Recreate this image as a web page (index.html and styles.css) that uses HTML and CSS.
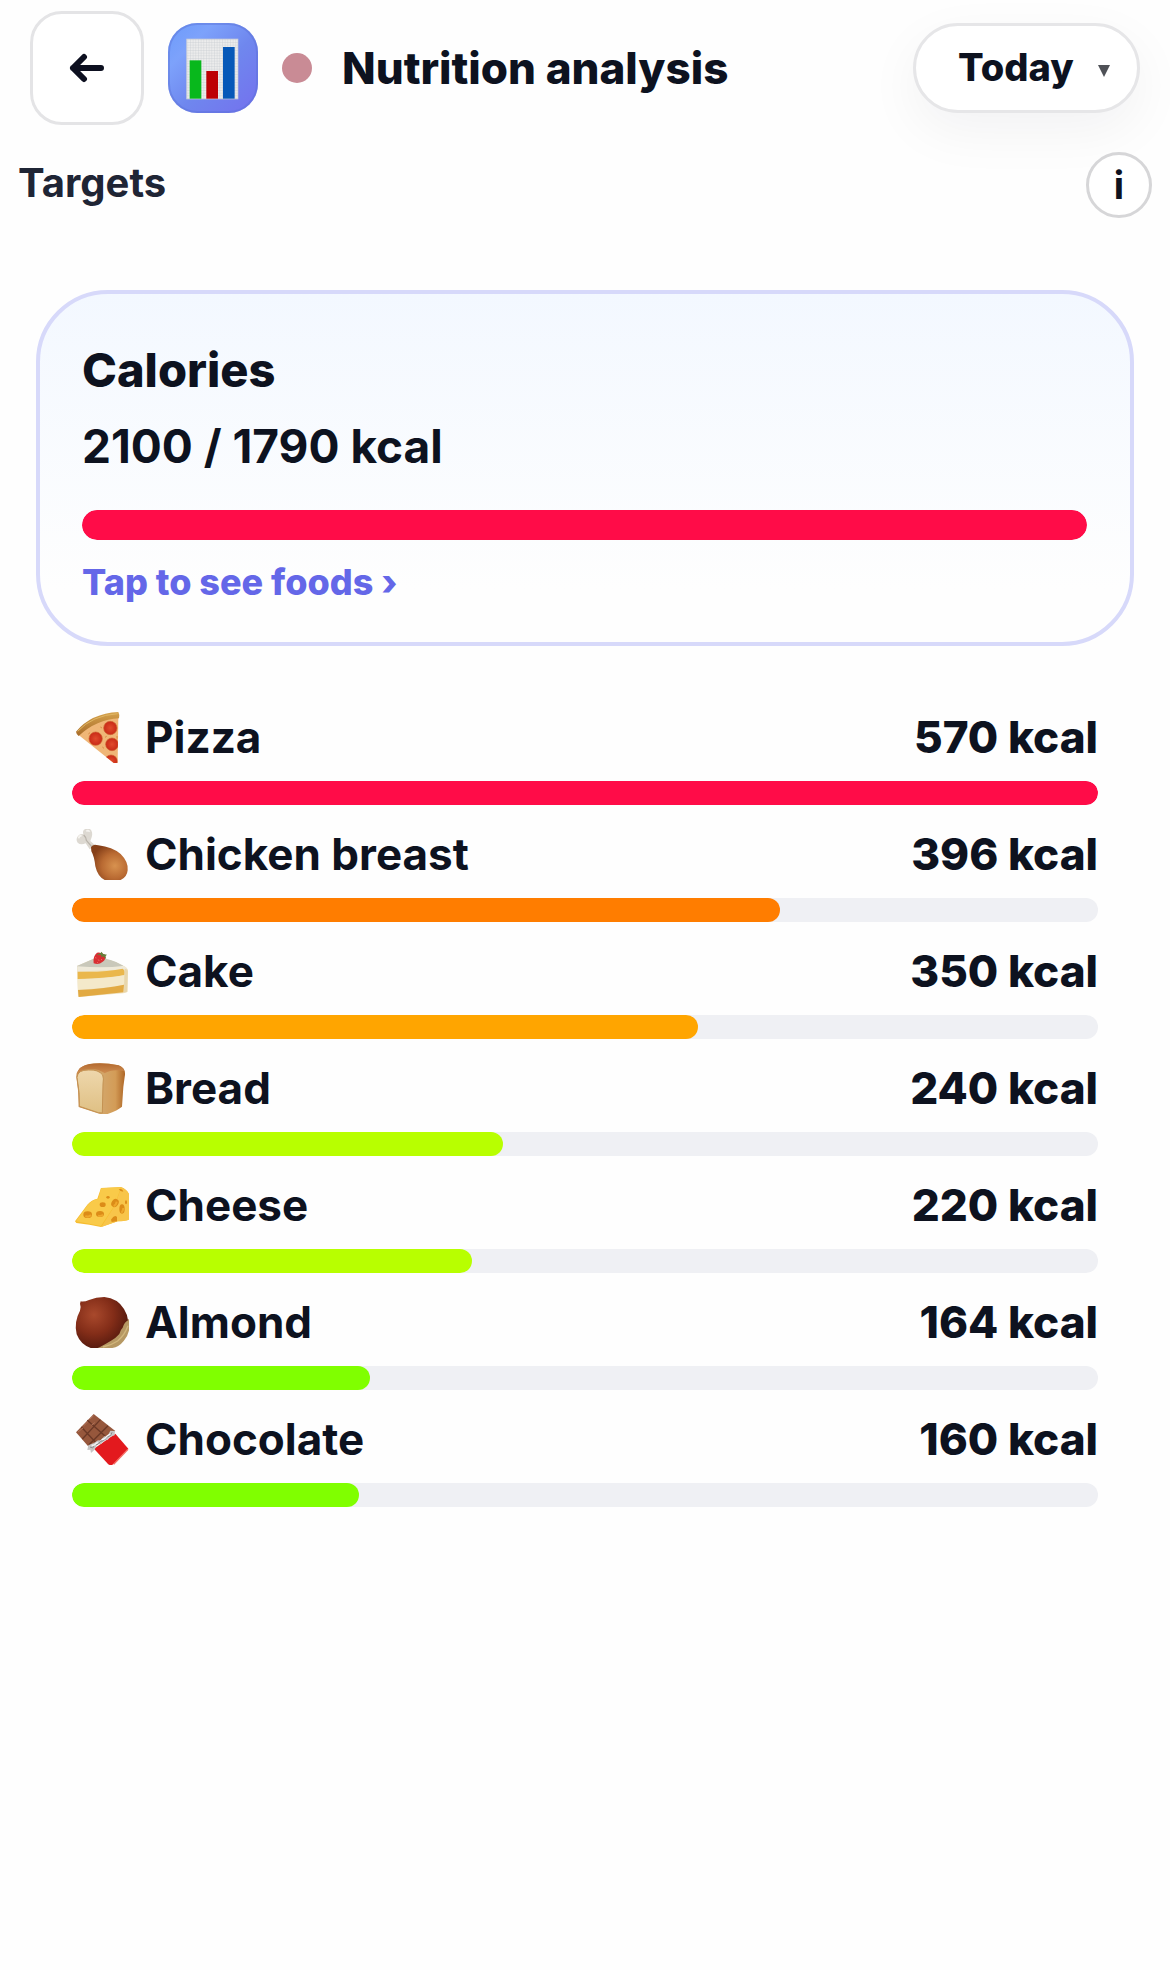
FILE: index.html
```html
<!DOCTYPE html>
<html lang="en">
<head>
<meta charset="utf-8">
<meta name="viewport" content="width=device-width, initial-scale=1">
<title>Nutrition analysis</title>
<link rel="stylesheet" href="styles.css">
</head>
<body>

<header class="topbar">
  <button class="back" type="button" aria-label="Back">
    <svg width="36" height="30" viewBox="0 0 36 30"><path d="M15 4 L4 15 L15 26 M4 15 H32"/></svg>
  </button>
  <svg class="logo" viewBox="504 69 270 270">
    <defs>
      <linearGradient id="logoBg" x1="0" y1="0" x2="1" y2="1">
        <stop offset="0" stop-color="#6c9bfa"/>
        <stop offset=".25" stop-color="#7da2fb"/>
        <stop offset=".55" stop-color="#6f87ee"/>
        <stop offset="1" stop-color="#7470ee"/>
      </linearGradient>
      <pattern id="grid" x="562" y="118" width="8" height="8" patternUnits="userSpaceOnUse">
        <rect width="8" height="8" fill="#ececec"/>
        <path d="M0 0H8M0 0V8" stroke="#c4cacf" stroke-width="2"/>
      </pattern>
    </defs>
    <rect x="504" y="69" width="270" height="270" rx="88" fill="url(#logoBg)"/>
    <rect x="507" y="72" width="264" height="264" rx="85" fill="none" stroke="#5a70d8" stroke-opacity=".45" stroke-width="6"/>
    <rect x="560" y="117" width="154" height="180" fill="url(#grid)" stroke="#c3cad8" stroke-width="2"/>
    <rect x="569" y="181" width="35" height="115" fill="#08b81c"/>
    <rect x="619" y="213" width="35" height="83" fill="#bd0003"/>
    <rect x="669" y="141" width="35" height="155" fill="#0658b8"/>
  </svg>
  <span class="dot"></span>
  <h1>Nutrition analysis</h1>
  <label class="period">
    <select aria-label="Period">
      <option>Today</option>
      <option>Week</option>
    </select>
    <svg width="12" height="12" viewBox="0 0 12 12"><path d="M0 0H12L6 12Z"/></svg>
  </label>
</header>

<main>
  <div class="targets">
    <h2>Targets</h2>
    <button class="info" type="button" aria-label="Info">i</button>
  </div>

  <section class="card">
    <h3>Calories</h3>
    <p class="total">2100 / 1790 kcal</p>
    <div class="bar big"><div class="fill red" style="width: 100%"></div></div>
    <a href="#foods">Tap to see foods ›</a>
  </section>

  <ul class="foods" id="foods">
    <li>
      <div class="row">
        <svg class="icon" viewBox="-9 0 171 153">
          <defs>
            <linearGradient id="crust" x1="0" y1="0" x2="0" y2="1"><stop offset="0" stop-color="#d5a24c"/><stop offset="1" stop-color="#a86c2a"/></linearGradient>
            <radialGradient id="pep"><stop offset="0" stop-color="#e04b2c"/><stop offset="1" stop-color="#c92a17"/></radialGradient>
            <clipPath id="slice"><path d="M10 68Q62 20 130 16L128 153H116Z"/></clipPath>
          </defs>
          <path d="M10 68Q62 20 130 16L128 153H116Z" fill="#efb677"/>
          <g clip-path="url(#slice)" fill="url(#pep)" stroke="#cf6030" stroke-width="2">
            <circle cx="106" cy="48" r="20"/>
            <circle cx="62" cy="80" r="20"/>
            <circle cx="111" cy="97" r="19"/>
            <circle cx="108" cy="148" r="19"/>
          </g>
          <path d="M76 45l5 3M82 105l5 4M90 76l5-3M40 66l5-4M126 72v8" stroke="#d98b45" stroke-width="3"/>
          <path d="M3 59Q48 4 130 0Q134 6 132 19Q65 22 11 72Q4 67 3 59Z" fill="url(#crust)"/>
          <path d="M8 58Q52 10 128 5" fill="none" stroke="#e0b764" stroke-width="3"/>
        </svg>
        <span class="name">Pizza</span>
        <span class="kcal">570 kcal</span>
      </div>
      <div class="bar"><div class="fill red" style="width: 100%"></div></div>
    </li>
    <li>
      <div class="row">
        <svg class="icon" viewBox="-9 0 171 153">
          <defs>
            <radialGradient id="meat" cx=".65" cy=".6" r=".65"><stop offset="0" stop-color="#d8924f"/><stop offset=".55" stop-color="#b96a32"/><stop offset="1" stop-color="#864019"/></radialGradient>
          </defs>
          <path d="M44 61L32 43Q17 50 8 41Q1 31 9 21Q16 13 25 16Q21 4 31 0H45Q55 8 50 25L46 36L62 50Z" fill="#ddd9d2"/>
          <path d="M26 18Q34 25 34 34L52 55" fill="none" stroke="#b9b3aa" stroke-width="4"/>
          <path d="M11 28Q12 20 20 20M34 7Q39 2 44 8" fill="none" stroke="#f5f3ef" stroke-width="5"/>
          <path d="M48 55Q53 43 70 49Q112 54 137 75Q161 99 158 124Q156 145 137 153H89Q68 143 61 112Q58 83 49 67Z" fill="url(#meat)"/>
        </svg>
        <span class="name">Chicken breast</span>
        <span class="kcal">396 kcal</span>
      </div>
      <div class="bar"><div class="fill orange" style="width: 69%"></div></div>
    </li>
    <li>
      <div class="row">
        <svg class="icon" viewBox="-9 0 171 153">
          <path d="M6 60L61 36Q96 33 145 59Q158 65 159 74L158 137Q154 140 144 142L11 153L9 150Z" fill="#eee0bd"/>
          <path d="M6 60L61 36Q104 34 145 59Q132 68 6 64Z" fill="#c9c8ba"/>
          <path d="M6 61Q90 67 143 60Q155 62 157 72Q145 69 8 77Z" fill="#eee9d9"/>
          <path d="M8 77Q95 79 143 68Q151 73 148 87Q102 96 8 99Z" fill="#eab74c"/>
          <path d="M8 100Q97 98 148 88L148 117Q97 127 9 131Z" fill="#f4e9ca"/>
          <path d="M9 132Q94 128 147 116L145 139L11 153Z" fill="#e2aa43"/>
          <path d="M149 68Q160 68 158 82L156 137L147 139Z" fill="#e8d6ab"/>
          <path d="M56 52Q53 30 66 20Q78 17 91 27Q94 41 82 48Q72 57 56 52Z" fill="#d92e32"/>
          <path d="M65 27L77 21L80 17L84 24L96 26L91 31L94 40L84 31L78 34L79 27Z" fill="#62813b"/>
          <path d="M62 34l1 3M70 41l2 3M66 49l2 1M79 41l2-2" stroke="#f68073" stroke-width="3"/>
        </svg>
        <span class="name">Cake</span>
        <span class="kcal">350 kcal</span>
      </div>
      <div class="bar"><div class="fill amber" style="width: 61%"></div></div>
    </li>
    <li>
      <div class="row">
        <svg class="icon" viewBox="-9 0 171 153">
          <defs>
            <linearGradient id="loaf"><stop offset="0" stop-color="#c68542"/><stop offset=".55" stop-color="#d3a568"/><stop offset=".8" stop-color="#d39c57"/><stop offset="1" stop-color="#ae6626"/></linearGradient>
            <linearGradient id="top" x1="0" y1="0" x2="0" y2="1"><stop offset="0" stop-color="#b3692f"/><stop offset="1" stop-color="#d29255"/></linearGradient>
            <linearGradient id="crumb" x1="0" y1="0" x2="0" y2="1"><stop offset="0" stop-color="#eed7ac"/><stop offset="1" stop-color="#dfc084"/></linearGradient>
          </defs>
          <path d="M4 42Q3 15 35 5Q80-4 131 7Q155 16 149 42L145 72L141 131Q128 142 98 153H75L11 132Q12 91 4 42Z" fill="url(#loaf)"/>
          <path d="M6 34Q9 9 43 3Q83-3 130 7Q144 12 147 24Q112 17 89 31Q70 16 39 18Q15 22 6 34Z" fill="url(#top)"/>
          <path d="M6 43Q8 20 41 21Q70 19 83 36Q87 46 84 63L82 150L70 149L13 130Q15 91 6 43Z" fill="url(#crumb)" stroke="#c49252" stroke-width="3"/>
        </svg>
        <span class="name">Bread</span>
        <span class="kcal">240 kcal</span>
      </div>
      <div class="bar"><div class="fill lime" style="width: 42%"></div></div>
    </li>
    <li>
      <div class="row">
        <svg class="icon" viewBox="-9 0 171 153">
          <path d="M0 124L37 74Q50 59 67 56L78 24L138 21Q162 31 165 52V115Q162 124 128 124L78 141Q45 134 4 129Z" fill="#f6bc2f"/>
          <path d="M79 141L120 76L139 22Q159 30 165 51V116Q160 124 128 124Z" fill="#f8c54a"/>
          <path d="M3 124L38 75Q54 58 70 57L78 25L138 22L119 76Q99 106 78 138Z" fill="#f9ca49"/>
          <g fill="#dc8c18">
            <ellipse cx="38" cy="104" rx="13" ry="10"/>
            <ellipse cx="75" cy="102" rx="12" ry="9"/>
            <ellipse cx="83" cy="74" rx="9" ry="7"/>
            <ellipse cx="120" cy="69" rx="10" ry="13" transform="rotate(35 120 69)"/>
            <ellipse cx="99" cy="52" rx="5" ry="4"/>
            <ellipse cx="141" cy="87" rx="8" ry="14"/>
            <ellipse cx="153" cy="67" rx="3" ry="6"/>
            <path d="M108 119Q118 103 126 111V124L110 126Z"/>
            <path d="M131 28Q141 24 145 34Q139 37 131 28Z"/>
          </g>
          <path d="M31 108q10 5 17-3M69 107q9 3 15-3M116 78q8-3 9-13M139 98q6-5 6-14" fill="none" stroke="#efa72a" stroke-width="6"/>
        </svg>
        <span class="name">Cheese</span>
        <span class="kcal">220 kcal</span>
      </div>
      <div class="bar"><div class="fill lime" style="width: 39%"></div></div>
    </li>
    <li>
      <div class="row">
        <svg class="icon" viewBox="-9 0 171 153">
          <defs>
            <radialGradient id="nut" cx=".35" cy=".35" r=".75"><stop offset="0" stop-color="#a9492c"/><stop offset=".5" stop-color="#832d18"/><stop offset="1" stop-color="#4a150c"/></radialGradient>
          </defs>
          <path d="M162 66Q169 106 146 132Q132 150 112 153H60Q75 110 162 66Z" fill="#b69863"/>
          <path d="M17 13Q28 15 42 9Q63 0 88 0Q128 4 147 36Q158 54 159 70Q148 76 143 92Q136 98 133 111Q122 124 108 131Q88 143 75 150L68 153H47Q17 143 5 112Q-4 75 15 41Q19 30 15 20Z" fill="url(#nut)"/>
          <path d="M159 86Q149 114 128 132Q106 146 84 150" fill="none" stroke="#d0b67d" stroke-width="4"/>
        </svg>
        <span class="name">Almond</span>
        <span class="kcal">164 kcal</span>
      </div>
      <div class="bar"><div class="fill green" style="width: 29%"></div></div>
    </li>
    <li>
      <div class="row">
        <svg class="icon" viewBox="-9 0 171 153">
          <path d="M3 55L56 0L121 51L42 100Z" fill="#96573c"/>
          <path d="M19 39L61 84M37 19L90 66M22 75L76 17M42 92L99 35" stroke="#6a3826" stroke-width="4"/>
          <path d="M9 54L24 42M26 35L39 23M45 15L56 5M49 34L59 26" stroke="#b0735a" stroke-width="3"/>
          <path d="M57 104L121 59L160 104L115 151Q106 156 99 150Z" fill="#e3191e"/>
          <path d="M116 151L159 106" stroke="#f56a62" stroke-width="4"/>
          <path d="M40 94L58 86L69 79L76 80L88 67L96 69L106 50L120 51L119 64L105 69L98 78L86 79L79 90L68 91L58 108L48 117L46 107L37 108Z" fill="#c7c5c5"/>
          <path d="M45 99l8 3l7-10l9-1l8-9l10-2l8-10l12-6l4-9" fill="none" stroke="#8b898c" stroke-width="3"/>
          <path d="M50 94l8-1l10-8M80 77l9-3l8-9l9-5" fill="none" stroke="#f7f7f7" stroke-width="4"/>
        </svg>
        <span class="name">Chocolate</span>
        <span class="kcal">160 kcal</span>
      </div>
      <div class="bar"><div class="fill green" style="width: 28%"></div></div>
    </li>
  </ul>
</main>

</body>
</html>
```
FILE: styles.css
```css
* {
  box-sizing: border-box;
}

body {
  margin: 0;
  background: #fefefe;
  color: #0d121f;
  font-family: Inter, "Liberation Sans", sans-serif;
}

h1, h2, h3, p, ul {
  margin: 0;
  padding: 0;
}

button, select {
  font-family: inherit;
  color: inherit;
  cursor: pointer;
}

/* top bar */
.topbar {
  display: flex;
  align-items: center;
  padding: 11px 30px 0;
}

.back {
  width: 114px;
  height: 114px;
  padding: 0;
  display: flex;
  align-items: center;
  justify-content: center;
  background: #fff;
  border: 3px solid #e4e4e6;
  border-radius: 32px;
}

.back path {
  fill: none;
  stroke: #0d1020;
  stroke-width: 6;
  stroke-linecap: round;
  stroke-linejoin: round;
}

.logo {
  width: 90px;
  height: 90px;
  margin-left: 24px;
}

.dot {
  width: 30px;
  height: 30px;
  margin-left: 24px;
  border-radius: 50%;
  background: #c98b95;
}

h1 {
  flex: 1;
  margin-left: 30px;
  font-size: 44px;
  font-weight: 800;
  line-height: 54px;
}

.period {
  display: flex;
  align-items: center;
  gap: 24px;
  height: 90px;
  padding: 0 27px 0 42px;
  background: #fff;
  border: 3px solid #e6e6e8;
  border-radius: 45px;
  box-shadow: 0 18px 54px rgba(15, 18, 32, 0.05);
}

.period select {
  appearance: none;
  padding: 0 0 3px;
  border: 0;
  background: none;
  font-size: 38px;
  font-weight: 800;
}

.period svg {
  margin-top: 6px;
}

.period path {
  fill: #4f5157;
}

/* targets */
.targets {
  display: flex;
  justify-content: space-between;
  align-items: flex-start;
  margin: 27px 18px 72px;
}

h2 {
  color: #1f2535;
  font-size: 40px;
  font-weight: 700;
  line-height: 62px;
}

.info {
  width: 66px;
  height: 66px;
  padding: 0;
  background: #fff;
  border: 3px solid #d6d6d8;
  border-radius: 50%;
  font-size: 38px;
  font-weight: 700;
}

/* calories card */
.card {
  margin: 0 36px;
  padding: 46px 43px 40px 42px;
  border: 4px solid #d7d9fa;
  border-radius: 72px;
  background: linear-gradient(#f3f8ff, #fefefe 85%);
}

h3 {
  font-size: 47px;
  font-weight: 800;
  line-height: 60px;
}

.total {
  margin: 18px 0 36px;
  font-size: 46px;
  font-weight: 700;
  line-height: 56px;
}

.card a {
  display: block;
  margin-top: 22px;
  color: #6467e8;
  font-size: 36px;
  font-weight: 800;
  line-height: 40px;
  text-decoration: none;
}

/* progress bars */
.bar {
  height: 24px;
  border-radius: 15px;
  background: #eff0f4;
  overflow: hidden;
}

.big {
  height: 30px;
}

.fill {
  height: 100%;
  border-radius: 15px;
}

.red {
  background: #ff0c48;
}

.orange {
  background: #ff7d00;
}

.amber {
  background: #ffa500;
}

.lime {
  background: #b8ff00;
}

.green {
  background: #80ff00;
}

/* food list */
.foods {
  display: flex;
  flex-direction: column;
  gap: 24px;
  margin: 66px 72px;
  list-style: none;
}

.row {
  display: flex;
  align-items: center;
  margin-bottom: 18px;
  font-size: 44px;
  line-height: 51px;
}

.icon {
  width: 57px;
  height: 51px;
  margin-right: 16px;
}

.name {
  flex: 1;
  font-weight: 700;
}

.kcal {
  font-weight: 800;
}
```
